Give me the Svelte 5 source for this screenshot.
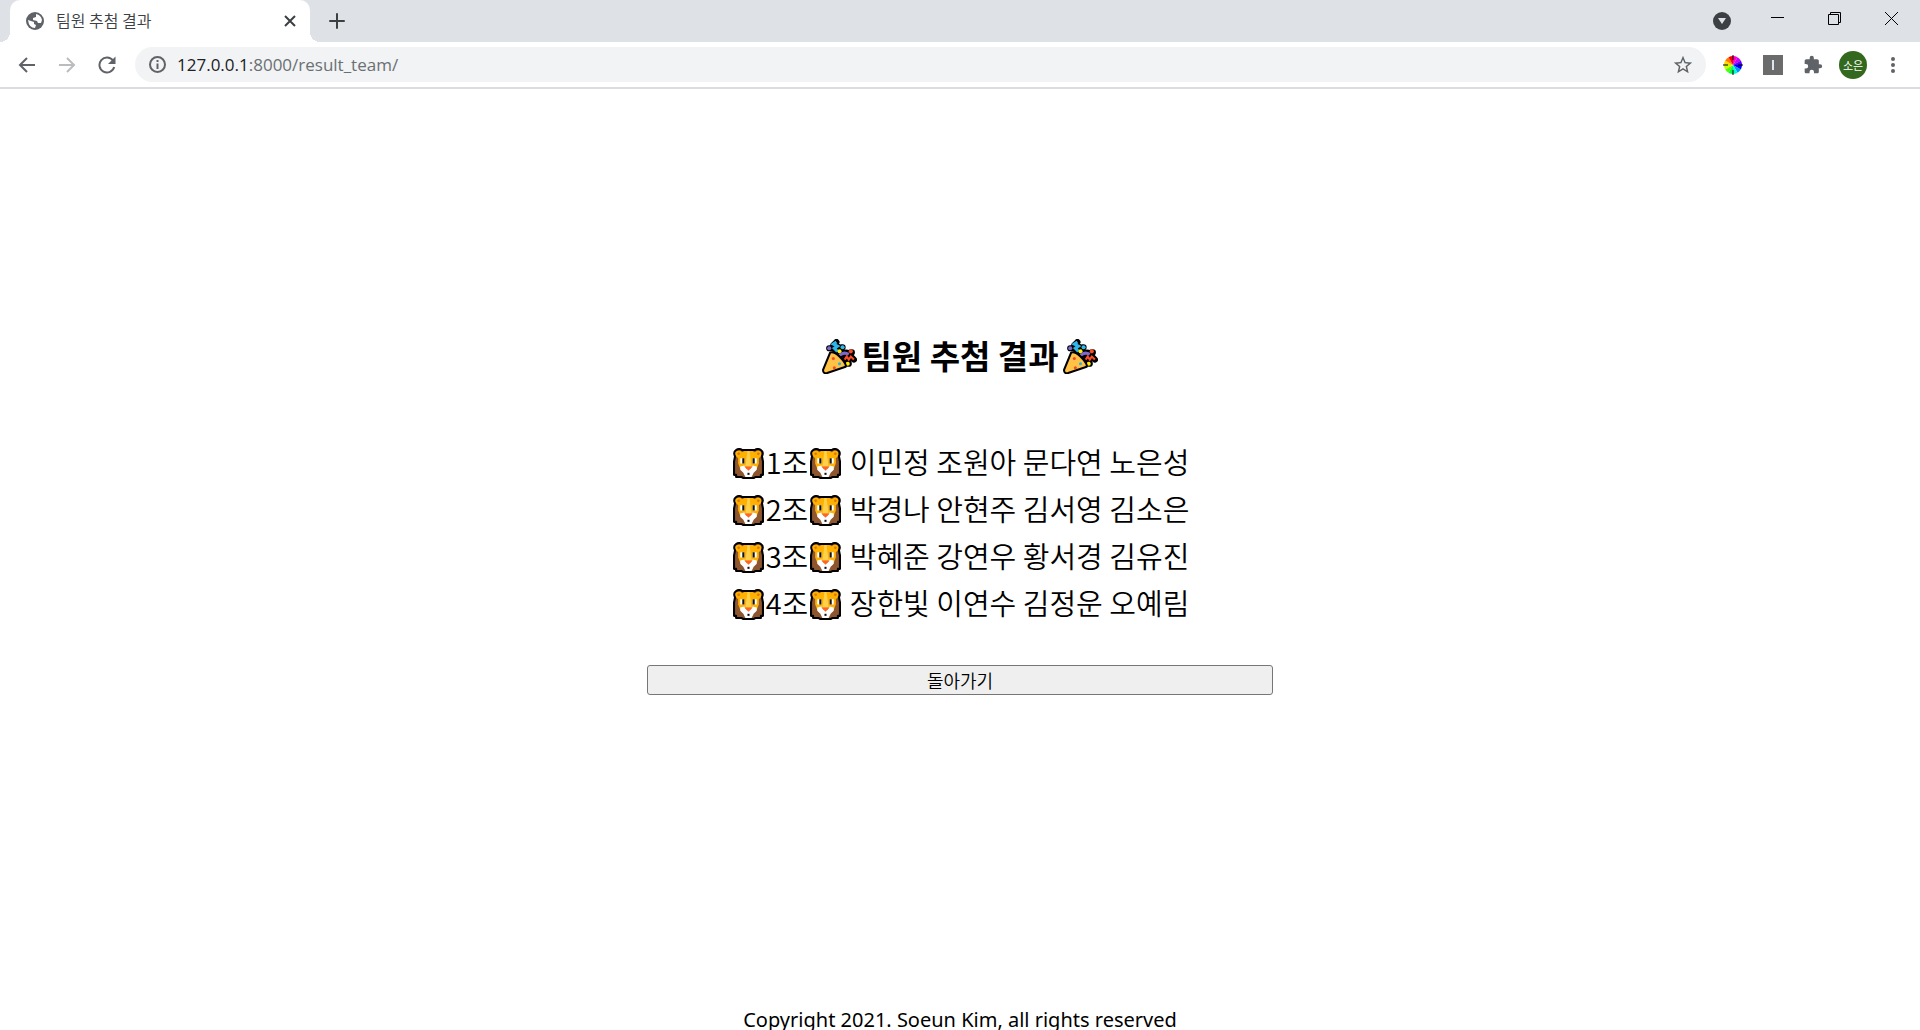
<script>
  const teams = [
    { name: '1조', members: ['이민정', '조원아', '문다연', '노은성'] },
    { name: '2조', members: ['박경나', '안현주', '김서영', '김소은'] },
    { name: '3조', members: ['박혜준', '강연우', '황서경', '김유진'] },
    { name: '4조', members: ['장한빛', '이연수', '김정운', '오예림'] }
  ];
  const wheel = ['#ff00c8', '#c800ff', '#5a00ff', '#0000ff', '#0096ff', '#00ffd0', '#00ff3c', '#50ff00', '#c8ff00', '#ffd800', '#ff7800', '#ff0000'];
  const slice = (i) => {
    const p = (a) => `${10 + 9 * Math.sin(a)} ${10 - 9 * Math.cos(a)}`;
    return `M10 10 L${p((i * Math.PI) / 6)} A9 9 0 0 1 ${p(((i + 1) * Math.PI) / 6)} Z`;
  };
</script>

{#snippet lion()}
  <svg class="lion" viewBox="0 0 30 30" role="img" aria-label="사자">
    <path d="M2 8Q0 4 3 2T9 2H21Q24 0 27 2T28 8L29 13V26H27V28H22L20 29H10L8 28H3V26H1V13Z" fill="#8e562e" stroke="#000" stroke-width="2" stroke-linejoin="round" />
    <path d="M3 8Q1 4 4 3T9 4L11 3H19L21 4Q24 2 26 3T27 8L25 10V15L23 20H7L5 15V10Z" fill="#ffb000" />
    <path d="M14 3H16L18 18H12Z" fill="#ffd04a" />
    <path d="M4 5 6 4 7 6 5 7ZM26 5 24 4 23 6 25 7Z" fill="#d87900" />
    <path d="M7 10H11V15H7ZM19 10H23V15H19Z" fill="#fff" />
    <path d="M7 18 11 17 13 20H17L19 17 23 18 23 21 20 24 18 28H12L10 24 7 21Z" fill="#fff" />
    <path d="M9 10H11V15H9ZM19 10H21V15H19Z" fill="#111" />
    <path d="M11 18H19L17 20 15 22 13 20Z" fill="#ff6428" />
    <path d="M14 24H16V26H14Z" fill="#111" />
  </svg>
{/snippet}

{#snippet popper()}
  <svg class="popper" viewBox="0 0 34 34" role="img" aria-label="축하">
    <g stroke="#000" stroke-width="6" stroke-linecap="round" stroke-linejoin="round" fill="none">
      <path d="M14 3 11 6 15 7 12 10 14 12" />
      <path d="M22 20 24 17 26 20 28 17 31 20" />
      <path d="M7 9H8M19 8H20M17 12H18M28 13H29M25 24H26" />
      <path d="M18 16Q22 12 26 14" />
    </g>
    <path d="M14 3 11 5 15 7 12 9 15 12" fill="none" stroke="#2eb6ec" stroke-width="3" />
    <circle cx="7" cy="9" r="2" fill="#7e68c8" />
    <circle cx="20" cy="8" r="2" fill="#31baf0" />
    <circle cx="17" cy="12" r="2" fill="#fff000" />
    <circle cx="25" cy="24" r="2" fill="#fff000" />
    <path d="M17 16Q21 12 26 15" fill="none" stroke="#7e68c8" stroke-width="3" />
    <path d="M22 20 24 17 26 20 28 17 31 20" fill="none" stroke="#ff4b24" stroke-width="2" />
    <circle cx="28" cy="12" r="2" fill="#ff4b24" />
    <path d="M8 13Q12 12 17 17 24 24 23 27L5 33Q1 34 1 30Z" fill="#ffc247" stroke="#000" stroke-width="2" stroke-linejoin="round" />
    <circle cx="11" cy="19" r="1.5" fill="#f04a24" />
    <circle cx="17" cy="24" r="1.5" fill="#25b5ea" />
    <circle cx="12" cy="28" r="1.5" fill="#f04a24" />
  </svg>
{/snippet}

<div class="window">
  <header>
    <div class="tabstrip">
      <div class="tab">
        <svg width="20" height="20" viewBox="0 0 20 20" aria-hidden="true">
          <circle cx="10" cy="10" r="9" fill="#5f6368" />
          <path d="M3 9 6 10 9 11 9 13 11 14 10 17Q4 17 3 9ZM11 3Q16 4 17 9L16 12 13 12 12 10 8 9 8 7 11 6Z" fill="#fff" />
        </svg>
        <span class="tab-title">팀원 추첨 결과</span>
        <button class="icon" aria-label="탭 닫기">
          <svg width="12" height="12" viewBox="0 0 12 12"><path d="M1 1 11 11M11 1 1 11" stroke="#3c4043" stroke-width="2" /></svg>
        </button>
      </div>
      <button class="icon new-tab" aria-label="새 탭">
        <svg width="16" height="16" viewBox="0 0 16 16"><path d="M8 1V15M1 8H15" stroke="#3c4043" stroke-width="2" stroke-linecap="round" /></svg>
      </button>
      <div class="controls">
        <button class="icon search" aria-label="탭 검색">
          <svg width="18" height="18" viewBox="0 0 18 18"><circle cx="9" cy="9" r="9" fill="#3c4043" /><path d="M5 6H13L9 12Z" fill="#dee1e6" /></svg>
        </button>
        <button class="icon" aria-label="최소화">
          <svg width="13" height="13" viewBox="0 0 13 13"><path d="M0 5.5H13" stroke="#000" /></svg>
        </button>
        <button class="icon" aria-label="이전 크기로">
          <svg width="13" height="13" viewBox="0 0 13 13"><path d="M.5 2.5H10.500V12.500H.5ZM2.500 2V.5H12.500V10.500H11" fill="none" stroke="#000" /></svg>
        </button>
        <button class="icon" aria-label="닫기">
          <svg width="13" height="13" viewBox="0 0 13 13"><path d="M0 0 13 13M13 0 0 13" stroke="#000" /></svg>
        </button>
      </div>
    </div>

    <div class="toolbar">
      <button class="icon nav" aria-label="뒤로">
        <svg width="18" height="18" viewBox="0 0 18 18"><path d="M17 9H2M9 2 2 9 9 16" fill="none" stroke="#5f6368" stroke-width="2" /></svg>
      </button>
      <button class="icon nav" aria-label="앞으로" disabled>
        <svg width="18" height="18" viewBox="0 0 18 18"><path d="M1 9H16M9 2 16 9 9 16" fill="none" stroke="#babcbe" stroke-width="2" /></svg>
      </button>
      <button class="icon nav" aria-label="새로고침">
        <svg width="18" height="18" viewBox="0 0 18 18"><path d="M15 4.500A7.500 7.500 0 1 0 16.200 11" fill="none" stroke="#5f6368" stroke-width="2" /><path d="M17.500 .5V8H10Z" fill="#5f6368" /></svg>
      </button>
      <div class="omnibox">
        <svg width="17" height="17" viewBox="0 0 17 17" aria-hidden="true"><circle cx="8.500" cy="8.500" r="7.500" fill="none" stroke="#5f6368" stroke-width="2" /><path d="M8.500 7.500V13M8.500 4V6" stroke="#5f6368" stroke-width="2" /></svg>
        <a class="url" href="#top"><span class="host">127.0.0.1</span>:8000/result_team/</a>
        <button class="icon" aria-label="북마크">
          <svg width="22" height="22" viewBox="0 0 24 24"><path d="M22 9.240l-7.190-.62L12 2 9.190 8.630 2 9.240l5.460 4.730L5.820 21 12 17.270 18.180 21l-1.630-7.030L22 9.240zM12 15.400l-3.760 2.270 1-4.280-3.320-2.880 4.380-.38L12 6.100l1.710 4.040 4.380.38-3.320 2.880 1 4.280L12 15.400z" fill="#5f6368" /></svg>
        </button>
      </div>
      <div class="extensions">
        <button class="icon" aria-label="색상 선택">
          <svg width="20" height="20" viewBox="0 0 20 20">
            {#each wheel as color, i}<path d={slice(i)} fill={color} />{/each}
            <path d="M10 0V5M10 15V20M0 10H5M15 10H20" stroke="#000" />
          </svg>
        </button>
        <button class="icon" aria-label="확장 프로그램 I">
          <svg width="20" height="20" viewBox="0 0 20 20"><path d="M0 0H20V20H0Z" fill="#6b6b6b" /><path d="M10 5V15" stroke="#dbe6f5" stroke-width="2" /></svg>
        </button>
        <button class="icon" aria-label="확장 프로그램">
          <svg width="20" height="20" viewBox="0 0 24 24"><path d="M20.500 11H19V7c0-1.100-.9-2-2-2h-4V3.500a2.500 2.500 0 0 0-5 0V5H4c-1.100 0-2 .9-2 2v3.800h1.500a2.700 2.700 0 0 1 0 5.400H2V20c0 1.100.9 2 2 2h3.800v-1.500a2.700 2.700 0 0 1 5.400 0V22H17c1.100 0 2-.9 2-2v-4h1.500a2.500 2.500 0 0 0 0-5z" fill="#5f6368" /></svg>
        </button>
        <button class="avatar">소은</button>
        <button class="icon menu" aria-label="메뉴">
          <svg width="4" height="18" viewBox="0 0 4 18"><circle cx="2" cy="3" r="2" fill="#5f6368" /><circle cx="2" cy="9" r="2" fill="#5f6368" /><circle cx="2" cy="15" r="2" fill="#5f6368" /></svg>
        </button>
      </div>
    </div>
  </header>

  <main>
    <h1>{@render popper()}팀원 추첨 결과{@render popper()}</h1>
    <div class="teams">
      {#each teams as team}
        <p>{@render lion()}{team.name}{@render lion()} {team.members.join(' ')}</p>
      {/each}
    </div>
    <button class="back">돌아가기</button>
  </main>

  <footer>Copyright 2021. Soeun Kim, all rights reserved</footer>
</div>

<style>
  :global(body) {
    background: #fff;
    overflow: hidden;
  }
  .window {
    display: flex;
    flex-direction: column;
    height: 100vh;
    overflow: hidden;
    font-family: 'Noto Sans CJK KR', sans-serif;
    color: #000;
  }
  button {
    font-family: inherit;
  }
  svg {
    display: block;
    flex: none;
  }
  .icon {
    display: flex;
    align-items: center;
    justify-content: center;
    padding: 0;
    border: 0;
    background: none;
  }
  header {
    flex: none;
    border-bottom: 2px solid #dadce0;
  }
  .tabstrip {
    display: flex;
    height: 42px;
    padding-left: 10px;
    background: #dee1e6;
  }
  .tab {
    position: relative;
    display: flex;
    align-items: center;
    box-sizing: border-box;
    width: 300px;
    padding: 0 14px 0 15px;
    border-radius: 10px 10px 0 0;
    background: #fff;
  }
  .tab::before,
  .tab::after {
    content: '';
    position: absolute;
    bottom: 0;
    width: 10px;
    height: 10px;
  }
  .tab::before {
    right: 100%;
    background: radial-gradient(circle at 0 0, #dee1e6 10px, #fff 10px);
  }
  .tab::after {
    left: 100%;
    background: radial-gradient(circle at 100% 0, #dee1e6 10px, #fff 10px);
  }
  .tab-title {
    flex: 1;
    margin-left: 11px;
    padding-bottom: 2px;
    font-size: 16px;
    line-height: 20px;
    font-weight: 350;
    color: #3c4043;
  }
  .new-tab {
    width: 32px;
    margin-left: 11px;
  }
  .controls {
    display: flex;
    height: 36px;
    margin-left: auto;
  }
  .controls .icon {
    width: 57px;
  }
  .controls .search {
    width: 54px;
    padding-top: 6px;
  }
  .toolbar {
    display: flex;
    align-items: center;
    height: 45px;
    padding: 0 17px 0 7px;
  }
  .nav {
    width: 40px;
    height: 34px;
  }
  .omnibox {
    display: flex;
    flex: 1;
    align-items: center;
    height: 35px;
    box-sizing: border-box;
    margin-left: 8px;
    padding: 0 12px 0 14px;
    border-radius: 18px;
    background: #f1f3f4;
  }
  .url {
    flex: 1;
    margin-left: 11px;
    font-family: 'Open Sans', sans-serif;
    font-size: 17px;
    line-height: 24px;
    color: #6b6f73;
    text-decoration: none;
  }
  .host {
    color: #202124;
  }
  .extensions {
    display: flex;
    align-items: center;
    gap: 20px;
    margin-left: 17px;
  }
  .avatar {
    width: 28px;
    height: 28px;
    margin: 0 -4px;
    padding: 0;
    border: 0;
    border-radius: 50%;
    background: #33691e;
    color: #fff;
    font-size: 11px;
    line-height: 28px;
  }
  .menu {
    width: 20px;
  }
  main {
    display: flex;
    flex: 1;
    flex-direction: column;
    align-items: center;
    padding-top: 242px;
  }
  h1 {
    display: flex;
    align-items: center;
    gap: 4px;
    margin: 0;
    font-size: 33px;
    line-height: 48px;
    font-weight: 700;
  }
  .popper {
    width: 35px;
    height: 35px;
    padding-top: 2px;
  }
  .teams {
    margin-top: 59px;
    font-size: 29px;
    line-height: 47px;
    font-weight: 350;
  }
  p {
    margin: 0;
    white-space: nowrap;
  }
  .lion {
    display: inline-block;
    width: 31px;
    height: 31px;
    margin: 0 2px;
    vertical-align: -5px;
  }
  .back {
    width: 626px;
    max-width: 100%;
    height: 30px;
    margin-top: 39px;
    padding: 0;
    border: 1px solid #767676;
    border-radius: 3px;
    background: #efefef;
    color: #000;
    font-size: 18px;
    line-height: 26px;
    font-weight: 350;
  }
  footer {
    flex: none;
    height: 24px;
    font-family: 'Noto Sans', sans-serif;
    font-size: 20px;
    line-height: 28px;
    text-align: center;
  }
</style>
